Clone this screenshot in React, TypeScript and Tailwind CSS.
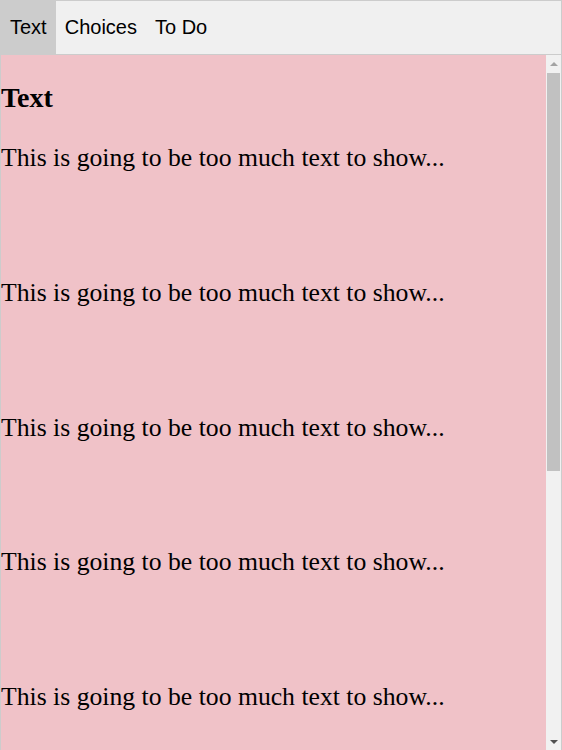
import * as React from "react";

const tabs = ["Text", "Choices", "To Do"];

function Scrollbar() {
    return (
        <div className="w-[15px] shrink-0 flex flex-col bg-[#f1f1f1]">
            <div className="h-[17px] flex items-center justify-center">
                <div className="w-0 h-0 border-x-[4px] border-x-transparent border-b-[4px] border-b-[#a3a3a3]" />
            </div>
            <div className="flex-1 flex flex-col px-[1px] pt-[1px]">
                <div className="h-[398px] bg-[#c1c1c1]" />
            </div>
            <div className="h-[17px] flex items-center justify-center">
                <div className="w-0 h-0 border-x-[4px] border-x-transparent border-t-[4px] border-t-[#505050]" />
            </div>
        </div>
    );
}

export default function App() {
    const [active, setActive] = React.useState("Text");
    const paragraphs = Array.from({ length: 8 });

    return (
        <div className="h-[750px] flex flex-col border-x border-t border-[#cccccc] bg-white overflow-hidden">
            <div className="flex bg-[#f0f0f0] border-b border-[#cccccc] font-['Liberation_Sans',Arial,sans-serif] text-[20px] text-black">
                {tabs.map((tab) => (
                    <button
                        key={tab}
                        onClick={() => setActive(tab)}
                        className={
                            tab === active
                                ? "px-[9px] py-[15px] leading-[23px] bg-[#cccccc]"
                                : "px-[9px] py-[15px] leading-[23px]"
                        }
                    >
                        {tab}
                    </button>
                ))}
            </div>

            <div className="flex-1 min-h-0 flex">
                <div className="flex-1 min-w-0 overflow-hidden bg-[#f0c2c8] font-['Liberation_Serif','Times_New_Roman',serif] text-black">
                    <h2 className="text-[28px] font-bold leading-[32px] mt-[27px] mb-[30px]">Text</h2>
                    {paragraphs.map((_, i) => (
                        <p key={i} className="text-[25.7px] leading-[28px] mb-[106.75px] whitespace-nowrap">
                            This is going to be too much text to show...
                        </p>
                    ))}
                </div>
                <Scrollbar />
            </div>
        </div>
    );
}
